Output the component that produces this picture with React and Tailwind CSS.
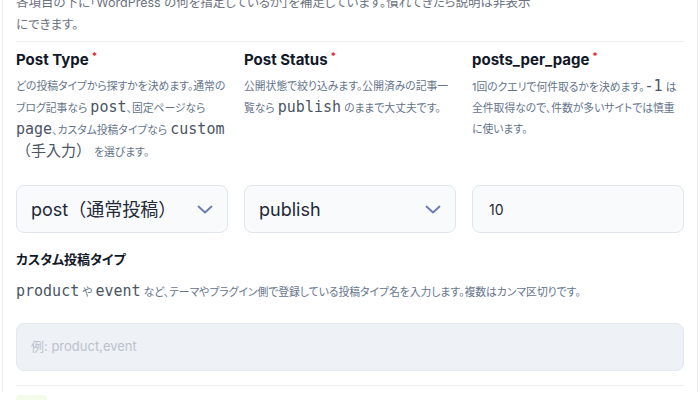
const sans = "font-['Inter','Noto_Sans_CJK_JP',sans-serif]"
const palt = "[font-feature-settings:'palt']"
const code = "font-['DejaVu_Sans_Mono','Noto_Sans_CJK_JP',monospace] text-[15px] text-[#4b5563] [font-feature-settings:normal]"

function Label({ children, required }) {
  return (
    <div className="flex items-start text-[15px] font-bold leading-5 text-[#111827]">
      {children}
      {required && <span className="ml-[3px] text-[10px] leading-3 text-[#dc2626]">*</span>}
    </div>
  )
}

function Chevron() {
  return (
    <svg width="16" height="9" viewBox="0 0 16 9" fill="none" className="text-[#6b7ab0]">
      <path d="M1.5 1.5l6.5 6 6.5-6" stroke="currentColor" strokeWidth="1.8" strokeLinecap="round" strokeLinejoin="round" />
    </svg>
  )
}

function Select({ value }) {
  return (
    <div className="flex h-12 items-center justify-between rounded-lg border border-[#e1e6ee] bg-[#f8fafc] pl-[14px] pr-[14px]">
      <span className="text-[18px] text-[#1f2937]">{value}</span>
      <Chevron />
    </div>
  )
}

function App() {
  return (
    <div className={`h-[400px] w-[700px] overflow-hidden bg-white px-[2px] ${sans}`}>
      <div className="h-full border-x border-[#e8eaee] px-[13px]">
        <p className={`mt-[-8px] text-[12.5px] leading-[22px] text-[#6b7280] ${palt}`}>
          各項目の下に「WordPress の何を指定しているか」を補足しています。慣れてきたら説明は非表示
          <br />
          にできます。
        </p>
        <div className="mt-[5px] border-t border-[#eceef2]" />

        <div className={`grid grid-cols-3 gap-x-4 pt-2 ${palt}`}>
          <div className="flex flex-col">
            <Label required>Post Type</Label>
            <p className="mt-[6px] text-[10.8px] leading-[21px] text-[#64748b]">
              どの投稿タイプから探すかを決めます。通常のブログ記事なら <span className={code}>post</span>、固定ページなら <span className={code}>page</span>、カスタム投稿タイプなら <span className={code}>custom（手入力）</span> を選びます。
            </p>
          </div>
          <div className="flex flex-col">
            <Label required>Post Status</Label>
            <p className="mt-[6px] text-[10.8px] leading-[21px] text-[#64748b]">
              公開状態で絞り込みます。公開済みの記事一覧なら <span className={code}>publish</span> のままで大丈夫です。
            </p>
          </div>
          <div className="flex flex-col">
            <Label required>posts_per_page</Label>
            <p className="mt-[6px] text-[10.8px] leading-[21px] text-[#64748b]">
              1回のクエリで何件取るかを決めます。<span className={code}>-1</span> は全件取得なので、件数が多いサイトでは慎重に使います。
            </p>
          </div>
        </div>

        <div className="mt-[22px] grid grid-cols-3 gap-x-4">
          <Select value="post（通常投稿）" />
          <Select value="publish" />
          <div className="flex h-12 items-center rounded-lg border border-[#e1e6ee] bg-[#f8fafc] px-4 text-[14px] text-[#1f2937]">
            10
          </div>
        </div>

        <div className={`mt-4 text-[13px] font-bold leading-5 text-[#111827] ${palt}`}>カスタム投稿タイプ</div>
        <p className={`mt-3 text-[10.8px] leading-[21px] text-[#64748b] ${palt}`}>
          <span className={code}>product</span> や <span className={code}>event</span> など、テーマやプラグイン側で登録している投稿タイプ名を入力します。複数はカンマ区切りです。
        </p>
        <div className="mt-5 flex h-12 items-center rounded-lg border border-[#e3e7ee] bg-[#eef1f6] px-[14px] text-[13px] text-[#bcc2cc]">
          例: product,event
        </div>
        <div className="mt-[14px] border-t border-[#eceef2]" />
        <div className="mt-[9px] h-[6px] w-[31px] rounded-t bg-[#f4fbe9]" />
      </div>
    </div>
  )
}

export default App
